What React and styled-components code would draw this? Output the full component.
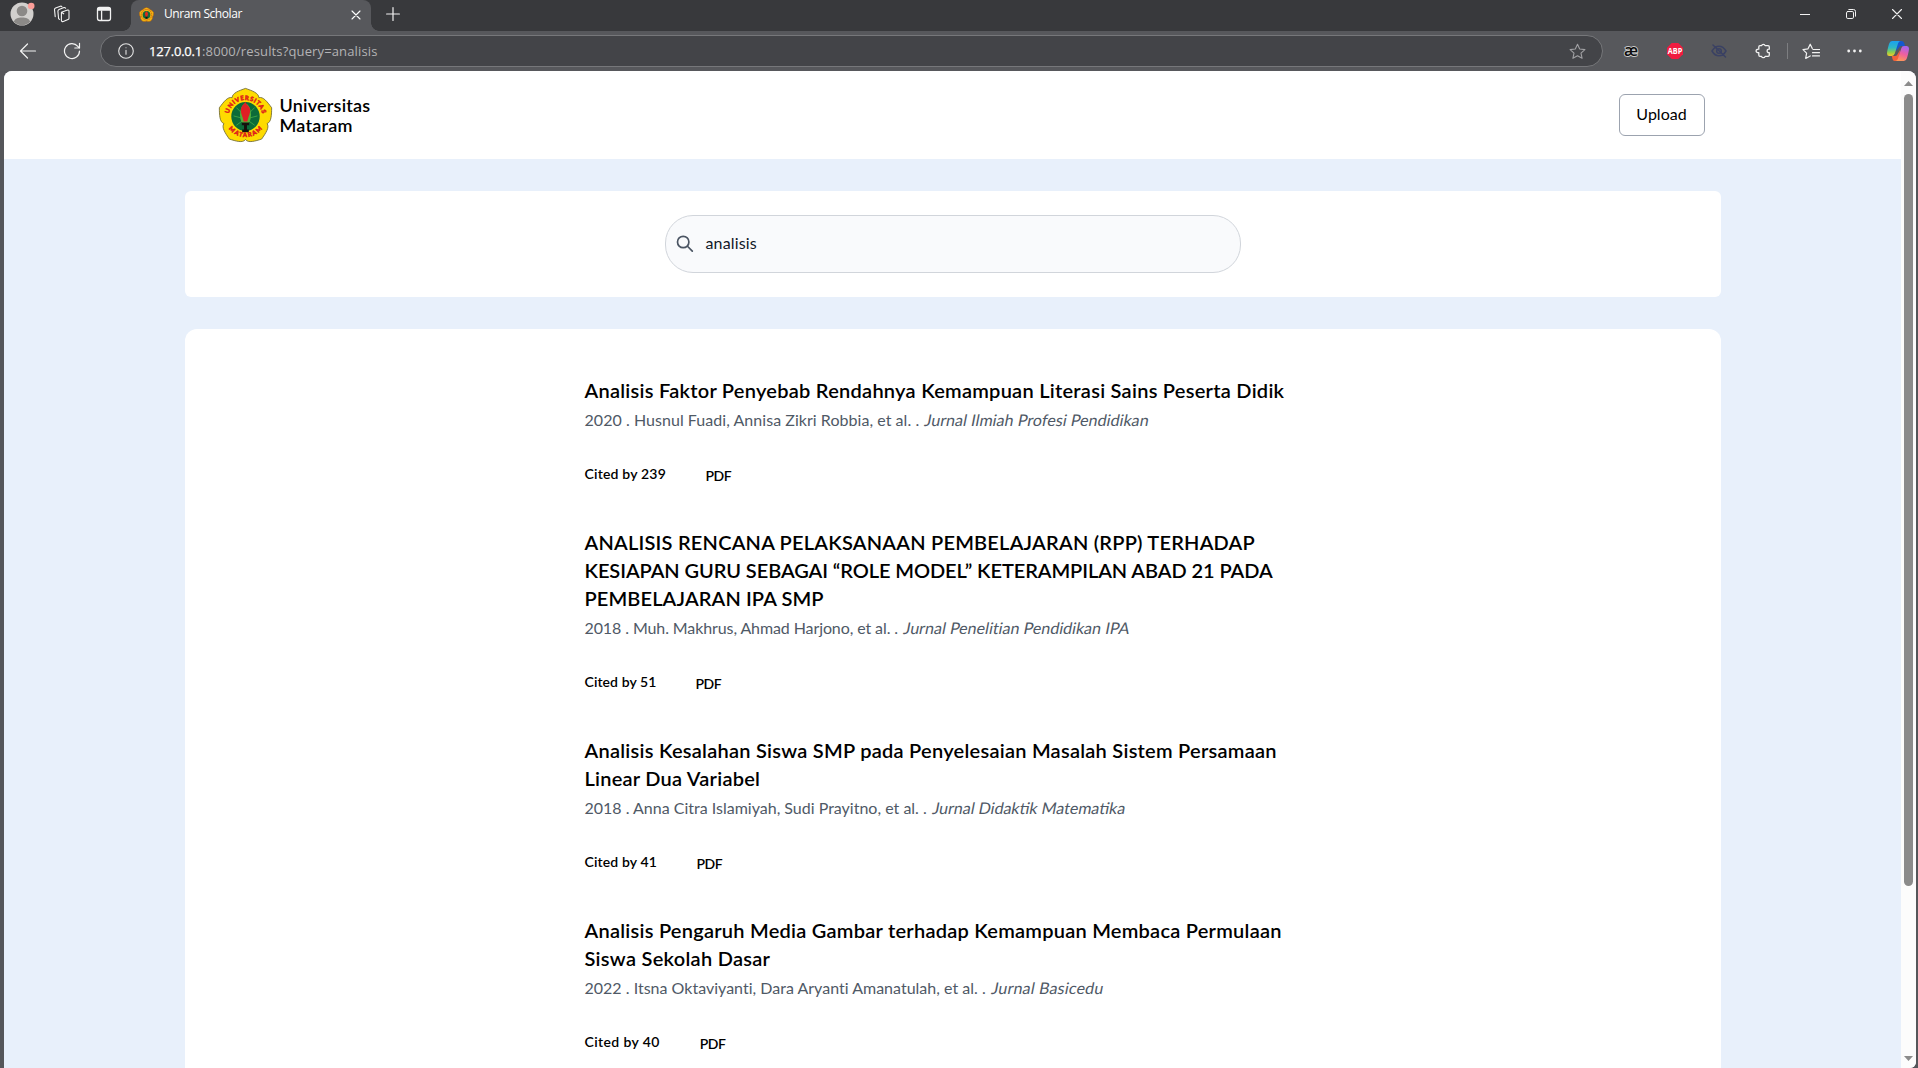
import React from "react";
import styled, { createGlobalStyle } from "styled-components";

const GlobalStyle = createGlobalStyle`
  *, *::before, *::after { box-sizing: border-box; }
  html, body { margin: 0; padding: 0; }
  body { overflow: hidden; background: #55565a; }
  h1, h2, p { margin: 0; font-weight: inherit; }
`;

const chromeFont = `"Open Sans", "Noto Sans", sans-serif`;
const pageFont = `Lato, "Open Sans", sans-serif`;

/* ---------- browser window ---------- */

const Window = styled.div`
  display: flex;
  flex-direction: column;
  width: 1918px;
  height: 1068px;
  overflow: hidden;
  background: #55565a;
  font-family: ${chromeFont};
`;

const TitleBar = styled.div`
  display: flex;
  align-items: stretch;
  flex: none;
  height: 31px;
  background: #38393c;
`;

const Slot = styled.div`
  display: flex;
  align-items: center;
  justify-content: center;
  flex: none;
  width: ${(p) => p.$width}px;
  color: ${(p) => p.$color || "#f2f2f2"};
  padding-bottom: ${(p) => p.$lift || 0}px;
  svg { display: block; flex: none; }
`;

const Tab = styled.div`
  position: relative;
  display: flex;
  align-items: center;
  width: 240px;
  margin-left: 3px;
  padding: 0 10px 2px 8px;
  border-radius: 8px 8px 0 0;
  background: #57585c;
  color: #ffffff;

  &::before,
  &::after {
    content: "";
    position: absolute;
    bottom: 0;
    width: 8px;
    height: 8px;
  }
  &::before {
    left: -8px;
    background: radial-gradient(circle at 0 0, #38393c 7.5px, #57585c 8px);
  }
  &::after {
    right: -8px;
    background: radial-gradient(circle at 100% 0, #38393c 7.5px, #57585c 8px);
  }
`;

const TabTitle = styled.span`
  flex: 1;
  margin-left: 10px;
  padding-bottom: 1px;
  font-size: 12px;
  line-height: 16px;
  letter-spacing: -0.42px;
`;

const Spacer = styled.div`
  flex: 1;
`;

const WindowButtons = styled.div`
  display: flex;
  margin-right: -2px;
`;

const ToolBar = styled.div`
  display: flex;
  align-items: center;
  flex: none;
  height: 40px;
  padding-left: 6px;
  background: #57585c;
`;

const AddressBar = styled.div`
  display: flex;
  align-items: center;
  width: 1503px;
  height: 32px;
  margin: 0 6px 0 6px;
  padding: 0 16px 0 17px;
  border: 1px solid #76777a;
  border-radius: 16px;
  background: #434448;
  color: #e4e4e4;
  svg { display: block; }
`;

const Url = styled.span`
  flex: 1;
  margin-left: 15px;
  color: #b3b3b5;
  font-size: 13px;
  line-height: 18px;
  letter-spacing: 0.14px;
`;

const Host = styled.span`
  color: #ffffff;
  letter-spacing: -0.2px;
  -webkit-text-stroke: 0.25px #ffffff;
`;

const Divider = styled.div`
  width: 1px;
  height: 16px;
  margin: 0 2px;
  background: #7d7e81;
`;

/* ---------- page ---------- */

const Viewport = styled.div`
  display: flex;
  flex: 1;
  min-height: 0;
  margin: 0 2px 0 4px;
  border-radius: 8px 8px 6px 0;
  overflow: hidden;
  background: #e8f0fb;
`;

const Page = styled.div`
  display: flex;
  flex-direction: column;
  align-items: center;
  width: 1897px;
  overflow: hidden;
  font-family: ${pageFont};
  color: #000000;
`;

const Header = styled.header`
  display: flex;
  justify-content: center;
  flex: none;
  width: 100%;
  height: 88px;
  background: #ffffff;
`;

const HeaderInner = styled.div`
  display: flex;
  align-items: center;
  justify-content: space-between;
  width: 1536px;
  padding: 0 16px 0 33px;
`;

const Brand = styled.div`
  display: flex;
  align-items: center;
  gap: 7px;
  svg { display: block; }
`;

const BrandName = styled.h1`
  display: flex;
  flex-direction: column;
  padding-bottom: 1px;
  font-size: 18px;
  font-weight: 600;
  line-height: 20px;
`;

const Line = styled.span`
  display: block;
  white-space: nowrap;
  letter-spacing: ${(p) => p.$tracking || 0}px;
`;

const UploadButton = styled.button`
  width: 86px;
  height: 42px;
  padding: 0 0 2px;
  border: 1px solid #9ca3af;
  border-radius: 6px;
  background: #ffffff;
  color: #000000;
  font-family: ${pageFont};
  font-size: 16px;
  line-height: 24px;
  letter-spacing: 0;
`;

const SearchCard = styled.section`
  display: flex;
  justify-content: center;
  flex: none;
  width: 1536px;
  margin-top: 32px;
  padding: 24px 0;
  border-radius: 6px;
  background: #ffffff;
`;

const SearchField = styled.div`
  display: flex;
  align-items: center;
  gap: 12px;
  width: 576px;
  height: 58px;
  padding: 0 0 2px 10px;
  border: 1px solid #d1d5db;
  border-radius: 28px;
  background: #f9fafc;
  color: #111827;
  font-size: 16px;
  line-height: 24px;
  letter-spacing: 0.14px;
  svg { display: block; }
`;

const ResultsCard = styled.main`
  display: flex;
  justify-content: center;
  flex: 1 0 auto;
  width: 1536px;
  margin-top: 32px;
  padding-top: 47px;
  border-radius: 12px 12px 0 0;
  background: #ffffff;
`;

const ResultList = styled.div`
  display: flex;
  flex-direction: column;
  gap: 44px;
  width: 736px;
`;

const Result = styled.article`
  display: flex;
  flex-direction: column;
`;

const ResultTitle = styled.h2`
  font-size: 20px;
  font-weight: 600;
  line-height: 28px;
`;

const Meta = styled.p`
  display: flex;
  gap: 6px;
  margin-top: 4px;
  color: #4f5966;
  font-size: 16px;
  line-height: 24px;
`;

const Journal = styled(Line)`
  transform: skewX(-11deg);
`;

const Actions = styled.div`
  display: flex;
  gap: 40px;
  margin-top: 32px;
  height: 20px;
  font-size: 14px;
  font-weight: 600;
  line-height: 20px;
`;

const Cited = styled(Line)`
  width: ${(p) => p.$width}px;
`;

const PdfLink = styled.a`
  padding-top: 2px;
  color: #000000;
  letter-spacing: -0.5px;
`;

const ScrollBar = styled.div`
  display: flex;
  flex-direction: column;
  align-items: center;
  width: 15px;
  padding: 10px 0 7px;
  background: #fcfcfc;
  svg { display: block; flex: none; }
`;

const Thumb = styled.div`
  width: 9px;
  height: 792px;
  margin-top: 8px;
  border-radius: 5px;
  background: #8b8b8b;
`;

/* ---------- drawings ---------- */

const polar = (r, deg) => {
  const a = (deg * Math.PI) / 180;
  return `${(30 + r * Math.cos(a)).toFixed(2)} ${(31.5 + r * Math.sin(a)).toFixed(2)}`;
};
const petals =
  "M" +
  polar(24.8, -126) +
  [0, 1, 2, 3, 4]
    .map((k) => {
      const t = -90 + 72 * k;
      return `C${polar(29, t - 30)} ${polar(28.5, t - 14)} ${polar(30, t)}C${polar(28.5, t + 14)} ${polar(29, t + 30)} ${polar(24.8, t + 36)}`;
    })
    .join("") +
  "Z";

const Favicon = () => (
  <svg width="15" height="15" viewBox="0 0 60 60">
    <path d={petals} fill="#f2b90f" stroke="#b0560f" strokeWidth="2" />
    <circle cx="30" cy="31" r="21" fill="none" stroke="#d9541a" strokeWidth="4" strokeDasharray="5 3" />
    <circle cx="30" cy="31" r="15.500" fill="#14693a" />
    <path d="M30 17c-2 3-6 5-6 10 0 5 2 8 3 12h6c1-4 3-7 3-12 0-5-4-7-6-10Z" fill="#e0281f" />
    <path d="M26 39h8v8h-8Z" fill="#15120d" />
  </svg>
);

const Crest = () => (
  <svg width="55" height="56" viewBox="0 0 60 60" preserveAspectRatio="none">
    <path d={petals} fill="#fedb00" stroke="#6b6530" strokeWidth="0.9" />
    <circle cx="30" cy="31.5" r="15.500" fill="#0b6b39" />
    <path d="M30 18v26M17 31l8 2M43 31l-8 2M20 22l7 7M40 22l-7 7M20 41l7-5M40 41l-7-5" stroke="#3fa346" strokeWidth="1" />
    <ellipse cx="30" cy="29.500" rx="6" ry="11.500" fill="#55b03a" />
    <path d="M30 15.500c-1 3-5 4-5 9.500 0 4 1 5 2 8l1 4h4l1-4c1-3 2-4 2-8 0-5-4-5-5-9.500Z" fill="#df2024" />
    <path d="M26 38h8v3h-2.400v4.500h2v3h-7.200v-3h2V41H26Z" fill="#15120d" />
    <defs>
      <path id="crest-top" d="M11.600 30.500A18.500 18.500 0 0 1 48.400 30.500" />
      <path id="crest-bottom" d="M7.200 33A22.900 22.900 0 0 0 52.800 33" />
    </defs>
    <g fill="#e01b1b" fontFamily="Lato, sans-serif" fontWeight="900" fontSize="6.600" stroke="#e01b1b" strokeWidth="0.500">
      <text>
        <textPath href="#crest-top" startOffset="50%" textAnchor="middle" textLength="50">UNIVERSITAS</textPath>
      </text>
      <text>
        <textPath href="#crest-bottom" startOffset="50%" textAnchor="middle" textLength="42">MATARAM</textPath>
      </text>
    </g>
  </svg>
);

const Svg = ({ w, h = w, sw = 1.1, children, ...rest }) => (
  <svg
    width={w}
    height={h}
    viewBox={`0 0 ${w} ${h}`}
    fill="none"
    stroke="currentColor"
    strokeWidth={sw}
    strokeLinecap="round"
    strokeLinejoin="round"
    {...rest}
  >
    {children}
  </svg>
);

const Avatar = () => (
  <svg width="26" height="26" viewBox="0 0 26 26">
    <circle cx="13" cy="13" r="11.5" fill="#d2d0ce" />
    <circle cx="13" cy="10" r="5.3" fill="#8b8987" />
    <path d="M4.8 20.8c1-3.300 4-4.300 8.200-4.300s7.200 1 8.200 4.300a11.500 11.500 0 0 1-16.400 0Z" fill="#8b8987" />
    <circle cx="22.200" cy="5" r="3.300" fill="#fb9d98" />
  </svg>
);

const Workspaces = () => (
  <Svg w={18}>
    <path d="M8.400 7.300 14.500 5.100q1.500-.4 1.500 1.100v7q0 1-1 1.400l-4.700 1.900q-1.600.5-1.900-1.100Z M8.400 7.300l2.300 1.500" />
    <path d="M5.600 13.600 4.900 6.200Q4.900 5 6 4.500L11 2.600q1-.3 1.600.6M2.200 11.600 1.500 4.600Q1.500 3.300 2.600 2.900L7.400 1.200q1-.2 1.500.5M5.600 13.600l1 .8" />
  </Svg>
);

const Panel = () => (
  <Svg w={16} sw={1.300}>
    <rect x="1.500" y="1.500" width="13" height="13" rx="2.200" />
    <path d="M2 4V3.200Q2 2 3.200 2h9.600Q14 2 14 3.200V4Z" fill="currentColor" />
    <path d="M5.600 5v9" />
  </Svg>
);

const starPath = "M8.500 1.200 10.700 6l5.200.6-3.900 3.500 1.100 5.200-4.600-2.600-4.600 2.600L5 10.100 1.100 6.600 6.300 6Z";

const Copilot = () => (
  <svg width="22" height="20" viewBox="0 0 22 20">
    <defs>
      <linearGradient id="cp-blue" x1="0" y1="0" x2="0" y2="1">
        <stop offset="0" stopColor="#1aa0f0" />
        <stop offset="0.450" stopColor="#2fb8c4" />
        <stop offset="0.750" stopColor="#8fd04a" />
        <stop offset="1" stopColor="#f7c92b" />
      </linearGradient>
      <linearGradient id="cp-pink" x1="0.600" y1="0" x2="0.300" y2="1">
        <stop offset="0" stopColor="#a765f0" />
        <stop offset="0.500" stopColor="#ef5fa0" />
        <stop offset="1" stopColor="#ff9a55" />
      </linearGradient>
    </defs>
    <path d="M10 0h4.500q2 0 2.700 2L18 5h-3.500q-2 0-2.700 2L9 10Z" fill="#1558cf" />
    <path d="M12 20H7.500q-1.500 0-2-2l-.7-3H8q2 0 2.700-2L13 9Z" fill="#f2603a" />
    <path d="M5 0h8.500q-1.800.3-2.500 2.500L7.800 12.600Q7 15 5 15H2.300Q0 15 0 12.500 0 10 2 3 2.800 0 5 0Z" fill="url(#cp-blue)" />
    <path d="M17 20H8.500q1.800-.3 2.500-2.500l3.200-10.100Q15 5 17 5h2.700Q22 5 22 7.500q0 2.500-2 9.500-.8 3-3 3Z" fill="url(#cp-pink)" />
  </svg>
);

/* ---------- data ---------- */

const results = [
  {
    title: [["Analisis Faktor Penyebab Rendahnya Kemampuan Literasi Sains Peserta Didik", 0.262]],
    meta: ["2020 . Husnul Fuadi, Annisa Zikri Robbia, et al. .", 0.045],
    journal: ["Jurnal Ilmiah Profesi Pendidikan", 0.07],
    cited: ["Cited by 239", 0.19, 81],
  },
  {
    title: [
      ["ANALISIS RENCANA PELAKSANAAN PEMBELAJARAN (RPP) TERHADAP", 0.215],
      ["KESIAPAN GURU SEBAGAI “ROLE MODEL” KETERAMPILAN ABAD 21 PADA", -0.075],
      ["PEMBELAJARAN IPA SMP", 0.12],
    ],
    meta: ["2018 . Muh. Makhrus, Ahmad Harjono, et al. .", -0.1],
    journal: ["Jurnal Penelitian Pendidikan IPA", 0.04],
    cited: ["Cited by 51", 0.08, 71],
  },
  {
    title: [
      ["Analisis Kesalahan Siswa SMP pada Penyelesaian Masalah Sistem Persamaan", 0.255],
      ["Linear Dua Variabel", 0.24],
    ],
    meta: ["2018 . Anna Citra Islamiyah, Sudi Prayitno, et al. .", 0],
    journal: ["Jurnal Didaktik Matematika", 0],
    cited: ["Cited by 41", 0.14, 72],
  },
  {
    title: [
      ["Analisis Pengaruh Media Gambar terhadap Kemampuan Membaca Permulaan", 0.247],
      ["Siswa Sekolah Dasar", 0.28],
    ],
    meta: ["2022 . Itsna Oktaviyanti, Dara Aryanti Amanatulah, et al. .", 0.01],
    journal: ["Jurnal Basicedu", 0.2],
    cited: ["Cited by 40", 0.38, 75.3],
  },
];

export default function App() {
  return (
    <Window>
      <GlobalStyle />
      <TitleBar>
        <Slot $width={44} $lift={3}><Avatar /></Slot>
        <Slot $width={36} $lift={3}><Workspaces /></Slot>
        <Slot $width={48} $lift={3}><Panel /></Slot>
        <Tab>
          <Favicon />
          <TabTitle>Unram Scholar</TabTitle>
          <Svg w={10}><path d="M1 1l8 8M9 1l-8 8" /></Svg>
        </Tab>
        <Slot $width={43} $lift={3}>
          <Svg w={14} sw={1.200}><path d="M7 .6v12.800M.6 7h12.800" /></Svg>
        </Slot>
        <Spacer />
        <WindowButtons>
          <Slot $width={46} $lift={2}><Svg w={10} h={9} sw={1}><path d="M0 4.500h10" /></Svg></Slot>
          <Slot $width={46} $lift={3}>
            <Svg w={10} h={10} sw={1}>
              <rect x=".5" y="2.500" width="7" height="7" rx="1.300" />
              <path d="M2.800.5h4.700q2 0 2 2v4.700" />
            </Svg>
          </Slot>
          <Slot $width={46} $lift={3}><Svg w={10} sw={1.100}><path d="M.5.5l9 9M9.500.5l-9 9" /></Svg></Slot>
        </WindowButtons>
      </TitleBar>

      <ToolBar>
        <Slot $width={44}><Svg w={18} sw={1.200}><path d="M16.500 9h-15M8.500 2 1.500 9l7 7" /></Svg></Slot>
        <Slot $width={44}>
          <Svg w={18} sw={1.200}><path d="M16.500 9A7.500 7.500 0 1 1 14.800 4.300L16.500 6M16.500 1.300V6h-4.700" /></Svg>
        </Slot>
        <AddressBar>
          <Svg w={16}>
            <circle cx="8" cy="8" r="7.300" />
            <path d="M8 7.200v4M8 4.700v.1" />
          </Svg>
          <Url><Host>127.0.0.1</Host>:8000/results?query=analisis</Url>
          <Svg w={17} sw={1.100} stroke="#a0a0a3"><path d={starPath} /></Svg>
        </AddressBar>
        <Slot $width={44}>
          <svg width="20" height="26" viewBox="0 0 20 26">
            <text
              x="10"
              y="17.500"
              textAnchor="middle"
              fontFamily="Open Sans, sans-serif"
              fontSize="17"
              fontWeight="600"
              textLength="14"
              lengthAdjust="spacingAndGlyphs"
              fill="#0d0d0d"
              stroke="#c9c9c9"
              strokeWidth="1.800"
              paintOrder="stroke"
            >æ</text>
          </svg>
        </Slot>
        <Slot $width={44}>
          <svg width="16" height="16" viewBox="0 0 16 16">
            <path d="M4.700 0h6.600L16 4.700v6.600L11.300 16H4.700L0 11.300V4.700Z" fill="#f01c40" />
            <text x="8" y="10.900" textAnchor="middle" fontFamily="Open Sans, sans-serif" fontSize="8" fontWeight="700" textLength="14.400" lengthAdjust="spacingAndGlyphs" fill="#fff">ABP</text>
          </svg>
        </Slot>
        <Slot $width={44} $color="#3a4163">
          <Svg w={16} h={14} sw={1.500}>
            <path d="M1 7Q3.800 2.200 8 2.200T15 7Q12.200 11.800 8 11.800T1 7ZM2 1l12.500 12" />
            <circle cx="8" cy="7" r="2.300" />
          </Svg>
        </Slot>
        <Slot $width={44}>
          <Svg w={16} sw={1.300}>
            <path d="M5 2.700h1.600a1.800 1.800 0 0 1 3.500 0h3q1.200 0 1.200 1.200v2.300c-2.800-.6-3 4 0 3.400v2.500q0 1.200-1.200 1.200h-3a1.800 1.800 0 0 1-3.500 0H5q-1.200 0-1.200-1.200v-2.400c-3.600.3-3.600-3.900 0-3.500V3.900Q3.800 2.700 5 2.700Z" />
          </Svg>
        </Slot>
        <Divider />
        <Slot $width={42}>
          <Svg w={18} h={17} sw={1.200}>
            <path d="M10.300 5.500 8.200 1.200 6 5.800l-5 .8 3.600 3.500-.9 5.300 4.500-2.500M11 6.500h6.500M10.500 9.700h7M10.500 12.900h7" />
          </Svg>
        </Slot>
        <Slot $width={45}>
          <svg width="15" height="4" viewBox="0 0 15 4" fill="currentColor">
            <circle cx="1.700" cy="2" r="1.400" /><circle cx="7.500" cy="2" r="1.400" /><circle cx="13.300" cy="2" r="1.400" />
          </svg>
        </Slot>
        <Slot $width={41}><Copilot /></Slot>
      </ToolBar>

      <Viewport>
        <Page>
          <Header>
            <HeaderInner>
              <Brand>
                <Crest />
                <BrandName>
                  <Line $tracking={0.2}>Universitas</Line>
                  <Line $tracking={0.2}>Mataram</Line>
                </BrandName>
              </Brand>
              <UploadButton>Upload</UploadButton>
            </HeaderInner>
          </Header>

          <SearchCard>
            <SearchField>
              <Svg w={18} sw={1.700} stroke="#4b5563">
                <circle cx="7.200" cy="8" r="5.700" />
                <path d="M11.700 12.500l4.600 4.600" />
              </Svg>
              analisis
            </SearchField>
          </SearchCard>

          <ResultsCard>
            <ResultList>
              {results.map((r) => (
                <Result key={r.title[0][0]}>
                  <ResultTitle>
                    {r.title.map(([text, tracking]) => (
                      <Line key={text} $tracking={tracking}>{text}</Line>
                    ))}
                  </ResultTitle>
                  <Meta>
                    <Line $tracking={r.meta[1]}>{r.meta[0]}</Line>
                    <Journal $tracking={r.journal[1]}>{r.journal[0]}</Journal>
                  </Meta>
                  <Actions>
                    <Cited $tracking={r.cited[1]} $width={r.cited[2]}>{r.cited[0]}</Cited>
                    <PdfLink>PDF</PdfLink>
                  </Actions>
                </Result>
              ))}
            </ResultList>
          </ResultsCard>
        </Page>
        <ScrollBar>
          <svg width="9" height="5" viewBox="0 0 9 5"><path d="M0 5 4.500 0 9 5Z" fill="#8b8b8b" /></svg>
          <Thumb />
          <Spacer />
          <svg width="9" height="5" viewBox="0 0 9 5"><path d="M0 0 4.500 5 9 0Z" fill="#8b8b8b" /></svg>
        </ScrollBar>
      </Viewport>
    </Window>
  );
}
